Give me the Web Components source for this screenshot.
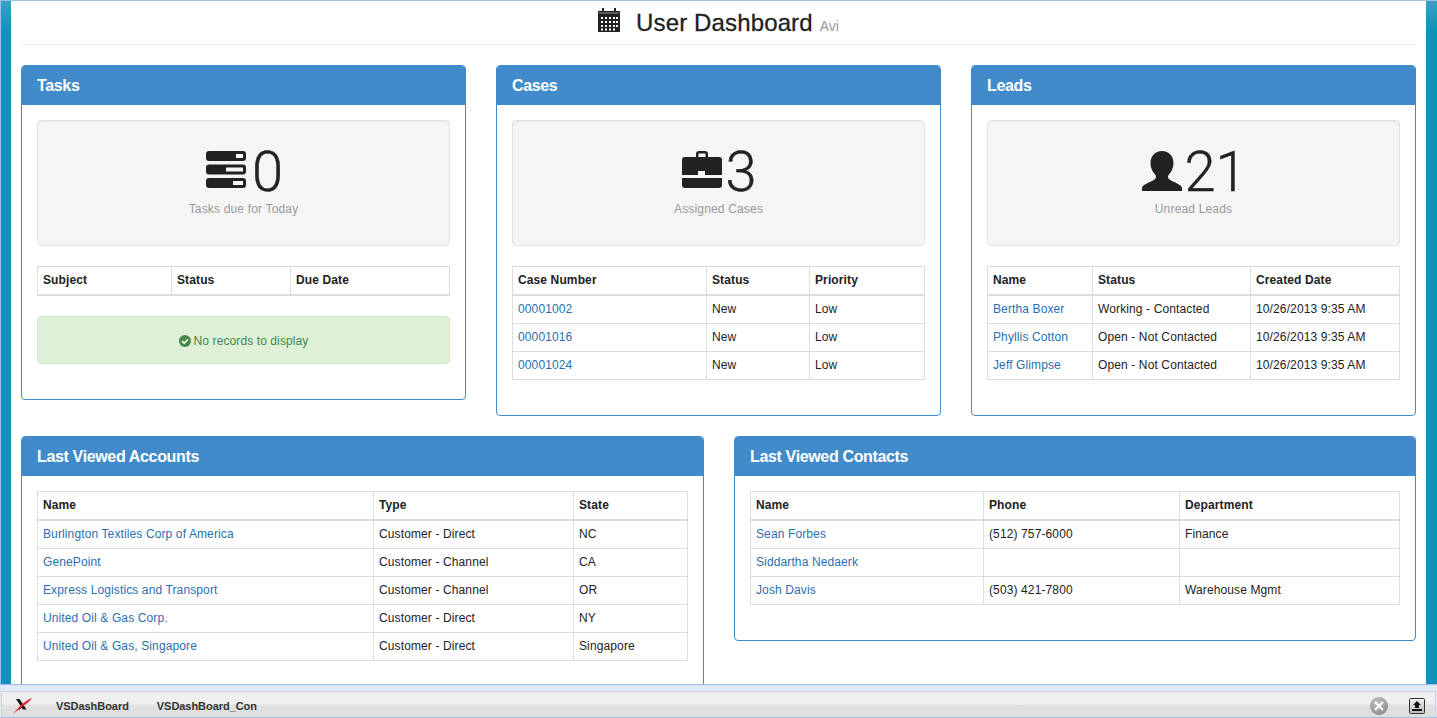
<!DOCTYPE html>
<html lang="en">
<head>
<meta charset="utf-8">
<title>User Dashboard</title>
<style>
  html, body { margin: 0; padding: 0; height: 100%; overflow: hidden; }
  body { font-family: "Liberation Sans", Arial, sans-serif; font-size: 12px; color: #222; }
</style>
</head>
<body>
<dash-shell>
  <dash-header title-text="User Dashboard" sub-text="Avi"></dash-header>
  <dash-row cols="445px 445px 445px" gap="30px" pad="20px">
    <dash-panel heading="Tasks">
      <stat-well icon="tasks" gap="6" value="0" label="Tasks due for Today"></stat-well>
      <data-table widths="134,119,159" head="Subject|Status|Due Date"></data-table>
      <empty-note>No records to display</empty-note>
    </dash-panel>
    <dash-panel heading="Cases">
      <stat-well icon="briefcase" gap="3" value="3" label="Assigned Cases"></stat-well>
      <data-table widths="194,103,115" head="Case Number|Status|Priority"
        rows="00001002|New|Low;00001016|New|Low;00001024|New|Low"></data-table>
    </dash-panel>
    <dash-panel heading="Leads">
      <stat-well icon="user" gap="2" value="21" label="Unread Leads"></stat-well>
      <data-table widths="105,158,149" head="Name|Status|Created Date"
        rows="Bertha Boxer|Working - Contacted|10/26/2013 9:35 AM;Phyllis Cotton|Open - Not Contacted|10/26/2013 9:35 AM;Jeff Glimpse|Open - Not Contacted|10/26/2013 9:35 AM"></data-table>
    </dash-panel>
  </dash-row>
  <dash-row cols="682.5px 682px" gap="30.5px" pad="0">
    <dash-panel heading="Last Viewed Accounts">
      <data-table widths="336,200,114" head="Name|Type|State"
        rows="Burlington Textiles Corp of America|Customer - Direct|NC;GenePoint|Customer - Channel|CA;Express Logistics and Transport|Customer - Channel|OR;United Oil &amp; Gas Corp.|Customer - Direct|NY;United Oil &amp; Gas, Singapore|Customer - Direct|Singapore"></data-table>
    </dash-panel>
    <dash-panel heading="Last Viewed Contacts">
      <data-table widths="233,196,220" head="Name|Phone|Department"
        rows="Sean Forbes|(512) 757-6000|Finance;Siddartha Nedaerk||;Josh Davis|(503) 421-7800|Warehouse Mgmt"></data-table>
    </dash-panel>
  </dash-row>
  <dev-dock slot="dock">
    <dock-tab>VSDashBoard</dock-tab>
    <dock-tab>VSDashBoard_Con</dock-tab>
  </dev-dock>
</dash-shell>

<script>
const ICONS = {
  tasks: `<svg width="40" height="37" viewBox="0 0 40 37" fill="#222">
    <path fill-rule="evenodd" d="M3 0h34a3 3 0 0 1 3 3v4a3 3 0 0 1-3 3H3a3 3 0 0 1-3-3V3a3 3 0 0 1 3-3zM30 3v4h7V3z"/>
    <path fill-rule="evenodd" d="M3 13.500h34a3 3 0 0 1 3 3v4a3 3 0 0 1-3 3H3a3 3 0 0 1-3-3v-4a3 3 0 0 1 3-3zM20 16.500v4h17v-4z"/>
    <path fill-rule="evenodd" d="M3 27h34a3 3 0 0 1 3 3v4a3 3 0 0 1-3 3H3a3 3 0 0 1-3-3v-4a3 3 0 0 1 3-3zM27 30v4h10v-4z"/>
  </svg>`,
  briefcase: `<svg width="40" height="37" viewBox="0 0 40 37" fill="#222">
    <path fill-rule="evenodd" d="M14 6V3a3 3 0 0 1 3-3h6a3 3 0 0 1 3 3v3h11a3 3 0 0 1 3 3v15H23v-4h-7v4H0V9a3 3 0 0 1 3-3zM16.500 6h7V2.500h-7z"/>
    <path d="M0 27h40v7a3 3 0 0 1-3 3H3a3 3 0 0 1-3-3z"/>
  </svg>`,
  user: `<svg width="40" height="40" viewBox="0 0 40 40" fill="#222">
    <path d="M20 0c7 0 11.500 5 11.500 12 0 5-2.500 9.500-5 12-1 1.500-.5 3.500 1 4.500C31 31 40 33.500 40 37v3H0v-3c0-3.500 9-6 12.500-8.500 1.500-1 2-3 1-4.500-2.500-2.500-5-7-5-12C8.500 5 13 0 20 0z"/>
  </svg>`,
  calendar: `<svg width="22" height="24" viewBox="0 0 22 24" style="display:block">
    <path fill="#222" d="M0 3h4V0h2v3h10V0h2v3h4v21H0z"/>
    <rect x="1" y="4.500" width="20" height="1" fill="#fff" opacity=".5"/>
    <path fill="#fff" d="M3 9h2v2H3zM7 9h2v2H7zM11 9h2v2h-2zM15 9h2v2h-2zM18 9h2v2h-2zM3 13h2v2H3zM7 13h2v2H7zM11 13h2v2h-2zM15 13h2v2h-2zM18 13h2v2h-2zM3 17h2v2H3zM7 17h2v2H7zM11 17h2v2h-2zM15 17h2v2h-2zM18 17h2v2h-2zM3 20.500h2v2H3zM7 20.500h2v2H7zM11 20.500h2v2h-2zM15 20.500h2v2h-2z"/>
  </svg>`
};

class DashShell extends HTMLElement {
  constructor() {
    super();
    this.attachShadow({ mode: 'open' }).innerHTML = `
      <style>
        :host { display: flex; flex-direction: column; height: 718px; overflow: hidden; background: #fff; }
        .frame {
          flex: 1; min-height: 0; overflow: hidden;
          border-top: 1px solid #9cc0ea;
          border-bottom: 1px solid #9cc0ea;
          border-left: 1px solid #9cc0ea;
          background: linear-gradient(#3aa0c4, #1390bd 30px);
          display: flex;
        }
        .page { flex: 1; min-width: 0; margin: 0 11px 0 10px; background: #fff; padding: 0 10px; overflow: hidden; }
      </style>
      <div class="frame"><div class="page"><slot></slot></div></div>
      <slot name="dock"></slot>`;
  }
}

class DashHeader extends HTMLElement {
  constructor() {
    super();
    this.attachShadow({ mode: 'open' }).innerHTML = `
      <style>
        :host { display: flex; justify-content: center; align-items: center; height: 43px; border-bottom: 1px solid #eee; box-sizing: content-box; }
        .icon { margin-right: 16px; margin-top: -5px; }
        h1 { margin: 4px 0 0; font-size: 24px; font-weight: 400; color: #222; line-height: 39px; letter-spacing: .14px; -webkit-text-stroke: .3px #222; }
        small { font-size: 14px; color: #999; margin-left: 7px; letter-spacing: 0; -webkit-text-stroke: 0; }
      </style>
      <span class="icon">${ICONS.calendar}</span>
      <h1>${this.getAttribute('title-text')}<small>${this.getAttribute('sub-text')}</small></h1>`;
  }
}

class DashRow extends HTMLElement {
  constructor() {
    super();
    this.attachShadow({ mode: 'open' }).innerHTML = `
      <style>
        :host { display: grid; align-items: start;
          grid-template-columns: ${this.getAttribute('cols')};
          column-gap: ${this.getAttribute('gap')};
          padding-top: ${this.getAttribute('pad')}; }
      </style>
      <slot></slot>`;
  }
}

class DashPanel extends HTMLElement {
  constructor() {
    super();
    this.attachShadow({ mode: 'open' }).innerHTML = `
      <style>
        :host { display: block; border: 1px solid #428bca; border-radius: 4px; background: #fff; overflow: hidden; margin-bottom: 20px; box-sizing: border-box; }
        header { background: #428bca; color: #fff; height: 39px; line-height: 39px; padding: 0 15px; font-size: 16px; font-weight: 700; letter-spacing: -.35px; }
        .body { padding: 15px; }
      </style>
      <header>${this.getAttribute('heading')}</header>
      <div class="body"><slot></slot></div>`;
  }
}

class StatWell extends HTMLElement {
  constructor() {
    super();
    this.attachShadow({ mode: 'open' }).innerHTML = `
      <style>
        :host { display: block; box-sizing: border-box; height: 126px; margin-bottom: 20px; background: #f5f5f5; border: 1px solid #e3e3e3; border-radius: 4px; box-shadow: inset 0 1px 1px rgba(0,0,0,.05); padding-top: 25px; text-align: center; }
        .big { display: flex; justify-content: center; align-items: flex-start; height: 50px; padding-left: 2px; gap: ${this.getAttribute('gap')}px; }
        .big svg { display: block; margin-top: 5px; }
        .num { font-family: Roboto, "Liberation Sans", sans-serif; font-weight: 300; font-size: 56px; line-height: 50px; margin-top: 1px; color: #222; -webkit-text-stroke: .4px #222; }
        .label { margin-top: 5px; color: #999; font-size: 12px; line-height: 17px; letter-spacing: .17px; }
      </style>
      <div class="big">${ICONS[this.getAttribute('icon')]}<span class="num">${this.getAttribute('value')}</span></div>
      <div class="label">${this.getAttribute('label')}</div>`;
  }
}

class DataTable extends HTMLElement {
  constructor() {
    super();
    const widths = this.getAttribute('widths').split(',');
    const head = this.getAttribute('head').split('|');
    const rows = (this.getAttribute('rows') || '').split(';').filter(Boolean).map(r => r.split('|'));
    const esc = s => s.replace(/&/g, '&amp;');
    this.attachShadow({ mode: 'open' }).innerHTML = `
      <style>
        :host { display: block; margin-bottom: 20px; }
        table { width: 100%; table-layout: fixed; border-collapse: collapse; font-size: 12px; line-height: 17px; letter-spacing: .12px; }
        th, td { border: 1px solid #ddd; padding: 5px; text-align: left; color: #222; }
        th { font-weight: 700; border-bottom-width: 2px; }
        a { color: #2a6fb0; text-decoration: none; }
      </style>
      <table>
        <colgroup>${widths.map(w => `<col style="width:${w}px">`).join('')}</colgroup>
        <thead><tr>${head.map(h => `<th>${h}</th>`).join('')}</tr></thead>
        <tbody>${rows.map(r => `<tr>${r.map((c, i) => `<td>${i === 0 ? `<a href="#">${esc(c)}</a>` : esc(c)}</td>`).join('')}</tr>`).join('')}</tbody>
      </table>`;
  }
}

class EmptyNote extends HTMLElement {
  constructor() {
    super();
    this.attachShadow({ mode: 'open' }).innerHTML = `
      <style>
        :host { display: flex; justify-content: center; align-items: center; gap: 3px; box-sizing: border-box; height: 48px; padding-top: 2px; margin-bottom: 20px; background: #dff0d8; border: 1px solid #d6e9c6; border-radius: 4px; color: #468847; font-size: 12px; letter-spacing: .1px; }
        svg { display: block; }
      </style>
      <svg width="12" height="12" viewBox="0 0 12 12"><circle cx="6" cy="6" r="6" fill="#468847"/><path d="M3 6l2.200 2.200L9 4.400" fill="none" stroke="#dff0d8" stroke-width="1.800"/></svg>
      <span><slot></slot></span>`;
  }
}

class DevDock extends HTMLElement {
  constructor() {
    super();
    this.attachShadow({ mode: 'open' }).innerHTML = `
      <style>
        :host { display: flex; box-sizing: border-box; height: 33px; flex: none; background: #dfe9f8; padding: 6px 1px 0; border-bottom: 1px solid #9cc0ea; }
        .bar { flex: 1; display: flex; align-items: center; box-sizing: border-box; border-top: 1px solid #d2d2d2; border-left: 1px solid #d2d2d2; border-right: 1px solid #d2d2d2; background: linear-gradient(#efefef 0, #efefef 48%, #e0e0e0 54%, #dedede 100%); padding: 3px 0 0 11px; }
        .logo { margin-right: 10px; display: block; }
        .tools { margin-left: auto; display: flex; align-items: center; gap: 21px; padding-right: 10px; }
        svg { display: block; }
      </style>
      <div class="bar">
        <svg class="logo" width="19" height="16" viewBox="0 0 19 16">
          <path d="M3 1h3.500l7 10.500H10z" fill="#111"/>
          <path d="M9 7.500l1 1-4 3.500-1-.5z" fill="#111"/>
          <path d="M0 16C5 10 11 3 19 0c-3 5-8 7-12 10.500z" fill="#e8222a"/>
        </svg>
        <slot></slot>
        <div class="tools">
          <svg width="18" height="18" viewBox="0 0 18 18"><defs><radialGradient id="g" cx=".4" cy=".3" r=".8"><stop offset="0" stop-color="#c4c4c4"/><stop offset="1" stop-color="#868686"/></radialGradient></defs><circle cx="9" cy="9" r="9" fill="url(#g)"/><path d="M5 5l8 8M13 5l-8 8" stroke="#fff" stroke-width="2"/></svg>
          <svg width="16" height="16" viewBox="0 0 16 16"><defs><linearGradient id="u" x1="0" y1="0" x2="0" y2="1"><stop offset="0" stop-color="#f0f0f0"/><stop offset="1" stop-color="#bbb"/></linearGradient></defs><rect x=".5" y=".5" width="15" height="15" rx="1" fill="url(#u)" stroke="#333"/><path d="M8 3l4 4H10v3H6V7H4z M3 11h10v2H3z" fill="#111"/></svg>
        </div>
      </div>`;
  }
}

class DockTab extends HTMLElement {
  constructor() {
    super();
    this.attachShadow({ mode: 'open' }).innerHTML = `
      <style>
        :host { display: block; font: 700 11px "Liberation Sans", Arial, sans-serif; color: #333; margin: 0 14px; letter-spacing: -.05px; }
      </style>
      <slot></slot>`;
  }
}

customElements.define('dash-shell', DashShell);
customElements.define('dash-header', DashHeader);
customElements.define('dash-row', DashRow);
customElements.define('dash-panel', DashPanel);
customElements.define('stat-well', StatWell);
customElements.define('data-table', DataTable);
customElements.define('empty-note', EmptyNote);
customElements.define('dev-dock', DevDock);
customElements.define('dock-tab', DockTab);
</script>
</body>
</html>
